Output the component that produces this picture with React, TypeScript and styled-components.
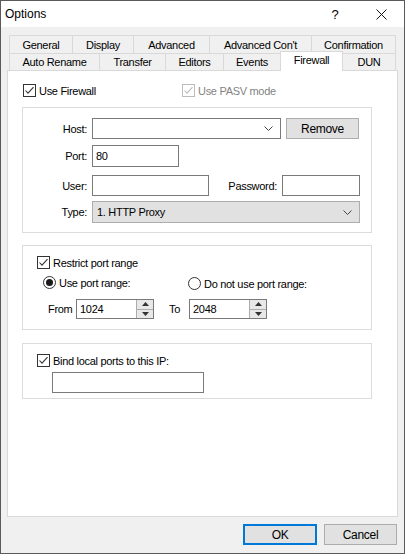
import styled, { createGlobalStyle } from "styled-components";

const GlobalStyle = createGlobalStyle`
  body {
    margin: 0;
    background: #ffffff;
  }
`;

const Window = styled.div`
  width: 405px;
  height: 554px;
  box-sizing: border-box;
  border: 1px solid #5a5a5a;
  background: #f0f0f0;
  display: flex;
  flex-direction: column;
  font-family: "Liberation Sans", Arial, sans-serif;
  font-size: 11px;
  letter-spacing: -0.3px;
  color: #000;
`;

const TitleBar = styled.div`
  height: 26px;
  background: #fff;
  display: flex;
  align-items: center;
  padding-left: 4px;
`;

const Title = styled.div`
  flex: 1;
  font-size: 12px;
  letter-spacing: 0;
`;

const TitleButton = styled.div`
  width: 46px;
  height: 26px;
  display: flex;
  align-items: center;
  justify-content: center;
  font-size: 13px;
  letter-spacing: 0;
`;

const Body = styled.div`
  flex: 1;
  display: flex;
  flex-direction: column;
  padding: 8px 6px 8px 6px;
`;

const Tabs = styled.div`
  display: flex;
  flex-direction: column;
  padding-left: 2px;
`;

const TabRow = styled.div<{ $h: number }>`
  display: flex;
  align-items: flex-end;
  height: ${(p) => p.$h}px;
`;

const Tab = styled.div<{ $w: number; $active?: boolean }>`
  position: relative;
  box-sizing: border-box;
  width: ${(p) => p.$w + 1}px;
  margin-right: -1px;
  height: ${(p) => (p.$active ? "calc(100% + 3px)" : "100%")};
  margin-bottom: ${(p) => (p.$active ? "-1px" : "0")};
  border: 1px solid #d9d9d9;
  border-bottom: none;
  background: ${(p) => (p.$active ? "#fff" : "#f0f0f0")};
  z-index: ${(p) => (p.$active ? 2 : 0)};
  display: flex;
  align-items: ${(p) => (p.$active ? "flex-start" : "center")};
  padding-top: ${(p) => (p.$active ? "2px" : "0")};
  justify-content: center;
`;

const Panel = styled.div`
  flex: 1;
  border: 1px solid #d9d9d9;
  background: #fff;
  padding: 13px 0 0 14px;
`;

const CheckRow = styled.div`
  display: flex;
  align-items: center;
  height: 13px;
  padding-left: 1px;
`;

const CheckItem = styled.div<{ $w?: number; $disabled?: boolean }>`
  display: flex;
  align-items: center;
  gap: 3px;
  width: ${(p) => (p.$w ? `${p.$w}px` : "auto")};
  color: ${(p) => (p.$disabled ? "#838383" : "#000")};
`;

const Box = styled.div<{ $disabled?: boolean }>`
  width: 13px;
  height: 13px;
  box-sizing: border-box;
  border: 1px solid ${(p) => (p.$disabled ? "#bcbcbc" : "#333")};
  background: #fff;
  display: flex;
`;

const Radio = styled.div`
  width: 13px;
  height: 13px;
  box-sizing: border-box;
  border: 1px solid #333;
  border-radius: 50%;
  background: #fff;
  display: flex;
  align-items: center;
  justify-content: center;
`;

const RadioDot = styled.div`
  width: 7px;
  height: 7px;
  border-radius: 50%;
  background: #1a1a1a;
`;

const Group = styled.div<{ $mt: number; $pt: number; $pb: number }>`
  width: 350px;
  box-sizing: border-box;
  margin-top: ${(p) => p.$mt}px;
  padding: ${(p) => p.$pt}px 0 ${(p) => p.$pb}px 0;
  border: 1px solid #dcdcdc;
`;

const FormRow = styled.div<{ $mt?: number; $pl?: number }>`
  display: flex;
  align-items: center;
  margin-top: ${(p) => p.$mt ?? 0}px;
  padding-left: ${(p) => p.$pl ?? 0}px;
`;

const Label = styled.div<{ $w: number; $right?: boolean }>`
  width: ${(p) => p.$w}px;
  flex-shrink: 0;
  text-align: ${(p) => (p.$right ? "right" : "left")};
  padding-right: ${(p) => (p.$right ? "5px" : "0")};
  box-sizing: border-box;
`;

const TextBox = styled.div<{ $w: number; $h: number; $ml?: number }>`
  width: ${(p) => p.$w}px;
  height: ${(p) => p.$h}px;
  margin-left: ${(p) => p.$ml ?? 0}px;
  box-sizing: border-box;
  border: 1px solid #7a7a7a;
  background: #fff;
  display: flex;
  align-items: center;
  padding-left: 3px;
`;

const DropList = styled(TextBox)`
  background: #e1e1e1;
  border-color: #adadad;
  padding-left: 4px;
`;

const Value = styled.span`
  flex: 1;
`;

const Chevron = styled.svg`
  width: 9px;
  height: 5px;
  margin-right: 7px;
`;

const SpinButtons = styled.div`
  width: 16px;
  height: 100%;
  display: flex;
  flex-direction: column;
  border-left: 1px solid #acacac;
`;

const SpinButton = styled.div<{ $top?: boolean }>`
  flex: 1;
  background: #e8e8e8;
  display: flex;
  align-items: center;
  justify-content: center;
  border-bottom: ${(p) => (p.$top ? "1px solid #acacac" : "none")};
`;

const Button = styled.div<{ $w: number; $ml?: number; $default?: boolean }>`
  width: ${(p) => p.$w}px;
  height: 21px;
  margin-left: ${(p) => p.$ml ?? 0}px;
  box-sizing: border-box;
  border: ${(p) => (p.$default ? "2px solid #0078d7" : "1px solid #adadad")};
  background: #e1e1e1;
  display: flex;
  align-items: center;
  justify-content: center;
  font-size: 12px;
`;

const Footer = styled.div`
  display: flex;
  justify-content: flex-end;
  margin-top: 7px;
  padding-right: 1px;
`;

const Check = ({ disabled }: { disabled?: boolean }) => (
  <Box $disabled={disabled}>
    <svg width="11" height="11" viewBox="0 0 11 11">
      <polyline
        points="1.5,5.5 4,8.2 9.5,2.2"
        fill="none"
        stroke={disabled ? "#bcbcbc" : "#333"}
        strokeWidth="1.1"
      />
    </svg>
  </Box>
);

const ChevronDown = () => (
  <Chevron viewBox="0 0 9 5">
    <polyline points="0.5,0.5 4.5,4.5 8.5,0.5" fill="none" stroke="#444" strokeWidth="1" />
  </Chevron>
);

const Spinner = ({ value, w }: { value: string; w: number }) => (
  <TextBox $w={w} $h={20} style={{ paddingRight: 0 }}>
    <Value>{value}</Value>
    <SpinButtons>
      <SpinButton $top>
        <svg width="7" height="4" viewBox="0 0 7 4">
          <polygon points="3.5,0 7,4 0,4" fill="#333" />
        </svg>
      </SpinButton>
      <SpinButton>
        <svg width="7" height="4" viewBox="0 0 7 4">
          <polygon points="0,0 7,0 3.5,4" fill="#333" />
        </svg>
      </SpinButton>
    </SpinButtons>
  </TextBox>
);

const topTabs = [
  { label: "General", w: 63 },
  { label: "Display", w: 61 },
  { label: "Advanced", w: 76 },
  { label: "Advanced Con't", w: 102 },
  { label: "Confirmation", w: 84 },
];

const frontTabs = [
  { label: "Auto Rename", w: 90 },
  { label: "Transfer", w: 66 },
  { label: "Editors", w: 58 },
  { label: "Events", w: 57 },
  { label: "Firewall", w: 62, active: true },
  { label: "DUN", w: 53 },
];

const App = () => {
  return (
    <>
      <GlobalStyle />
      <Window>
        <TitleBar>
          <Title>Options</Title>
          <TitleButton>?</TitleButton>
          <TitleButton>
            <svg width="11" height="11" viewBox="0 0 11 11">
              <path d="M0.5 0.5 L10.5 10.5 M10.5 0.5 L0.5 10.5" stroke="#111" strokeWidth="1" />
            </svg>
          </TitleButton>
        </TitleBar>

        <Body>
          <Tabs>
            <TabRow $h={18}>
              {topTabs.map((t) => (
                <Tab key={t.label} $w={t.w}>{t.label}</Tab>
              ))}
            </TabRow>
            <TabRow $h={17}>
              {frontTabs.map((t) => (
                <Tab key={t.label} $w={t.w} $active={t.active}>{t.label}</Tab>
              ))}
            </TabRow>
          </Tabs>

          <Panel>
            <CheckRow>
              <CheckItem $w={159}>
                <Check />
                Use Firewall
              </CheckItem>
              <CheckItem $disabled>
                <Check disabled />
                Use PASV mode
              </CheckItem>
            </CheckRow>

            <Group $mt={10} $pt={10} $pb={9}>
              <FormRow>
                <Label $w={69} $right>Host:</Label>
                <TextBox $w={189} $h={21}>
                  <Value />
                  <ChevronDown />
                </TextBox>
                <Button $w={73} $ml={5}>Remove</Button>
              </FormRow>
              <FormRow $mt={6}>
                <Label $w={69} $right>Port:</Label>
                <TextBox $w={87} $h={22}>80</TextBox>
              </FormRow>
              <FormRow $mt={8}>
                <Label $w={69} $right>User:</Label>
                <TextBox $w={117} $h={21}>
                  <Value />
                </TextBox>
                <Label $w={73} $right>Password:</Label>
                <TextBox $w={78} $h={21}>
                  <Value />
                </TextBox>
              </FormRow>
              <FormRow $mt={5}>
                <Label $w={69} $right>Type:</Label>
                <DropList $w={268} $h={22}>
                  <Value>1. HTTP Proxy</Value>
                  <ChevronDown />
                </DropList>
              </FormRow>
            </Group>

            <Group $mt={12} $pt={10} $pb={10}>
              <FormRow $pl={14}>
                <CheckItem>
                  <Check />
                  Restrict port range
                </CheckItem>
              </FormRow>
              <FormRow $mt={6} $pl={20}>
                <CheckItem $w={145}>
                  <Radio>
                    <RadioDot />
                  </Radio>
                  Use port range:
                </CheckItem>
                <CheckItem style={{ marginTop: 2 }}>
                  <Radio />
                  Do not use port range:
                </CheckItem>
              </FormRow>
              <FormRow $mt={9} $pl={25}>
                <Label $w={28}>From</Label>
                <Spinner value="1024" w={78} />
                <Label $w={20} style={{ marginLeft: 15 }}>To</Label>
                <Spinner value="2048" w={78} />
              </FormRow>
            </Group>

            <Group $mt={13} $pt={10} $pb={5}>
              <FormRow $pl={14}>
                <CheckItem>
                  <Check />
                  Bind local ports to this IP:
                </CheckItem>
              </FormRow>
              <FormRow $mt={5} $pl={29}>
                <TextBox $w={152} $h={21} />
              </FormRow>
            </Group>
          </Panel>

          <Footer>
            <Button $w={74} $default>OK</Button>
            <Button $w={73} $ml={7}>Cancel</Button>
          </Footer>
        </Body>
      </Window>
    </>
  );
};

export default App;
